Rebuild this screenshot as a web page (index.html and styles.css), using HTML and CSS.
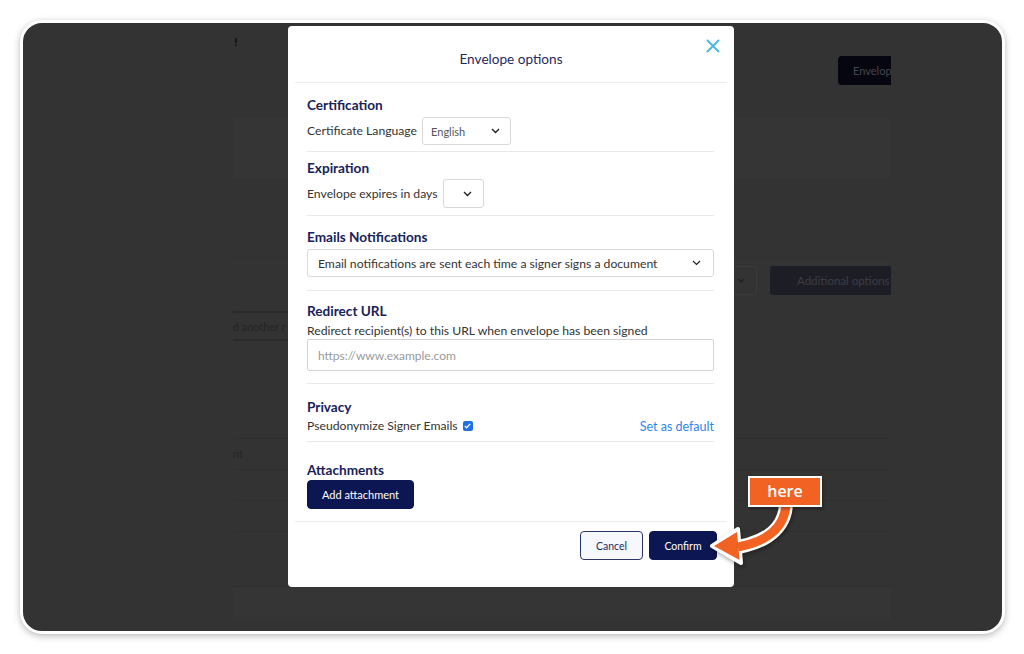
FILE: index.html
```html
<!DOCTYPE html>
<html lang="en">
<head>
<meta charset="utf-8">
<title>Envelope options</title>
<link rel="stylesheet" href="styles.css">
</head>
<body>
<div class="frame">
  <div class="bgpage">
    <div class="bg-top"><span class="bang">!</span></div>
    <div class="bg-actions"><span class="bg-btn">Envelope options</span></div>
    <div class="bg-box"></div>
    <div class="bg-line l1"></div>
    <div class="bg-row">
      <span class="bg-select"><svg width="8" height="5" viewBox="0 0 8 5"><path d="M1 1l3 3 3-3" fill="none" stroke="#222" stroke-width="1.2"/></svg></span>
      <span class="bg-btn2">Additional options</span>
    </div>
    <div class="bg-recip"><span>Add another r</span></div>
    <div class="bg-list">
      <div class="bg-li first">Document</div>
      <div class="bg-li"></div>
      <div class="bg-li"></div>
      <div class="bg-li"></div>
    </div>
    <div class="bg-foot"></div>
  </div>

  <div class="modal">
    <div class="modal-head">
      <h1 class="modal-title">Envelope options</h1>
      <svg class="close" width="14" height="14" viewBox="0 0 14 14"><path d="M1.5 1.5l11 11M12.5 1.5l-11 11" stroke="#4cb9e3" stroke-width="2" stroke-linecap="round"/></svg>
    </div>
    <div class="modal-body">
      <section class="sec s1">
        <h2>Certification</h2>
        <div class="row">
          <span class="lbl">Certificate Language</span>
          <div class="select lang"><span class="val">English</span><svg width="9" height="6" viewBox="0 0 9 6"><path d="M1 1l3.5 3.5L8 1" fill="none" stroke="#222" stroke-width="1.4"/></svg></div>
        </div>
      </section>
      <section class="sec s2">
        <h2>Expiration</h2>
        <div class="row">
          <span class="lbl">Envelope expires in days</span>
          <div class="select days"><svg width="9" height="6" viewBox="0 0 9 6"><path d="M1 1l3.5 3.5L8 1" fill="none" stroke="#222" stroke-width="1.4"/></svg></div>
        </div>
      </section>
      <section class="sec s3">
        <h2>Emails Notifications</h2>
        <div class="select wide"><span class="val dark">Email notifications are sent each time a signer signs a document</span><svg width="9" height="6" viewBox="0 0 9 6"><path d="M1 1l3.5 3.5L8 1" fill="none" stroke="#222" stroke-width="1.2"/></svg></div>
      </section>
      <section class="sec s4">
        <h2>Redirect URL</h2>
        <p class="lbl desc">Redirect recipient(s) to this URL when envelope has been signed</p>
        <div class="input"><span class="ph">https://www.example.com</span></div>
      </section>
      <section class="sec s5">
        <h2>Privacy</h2>
        <div class="row spread">
          <label class="lbl check">Pseudonymize Signer Emails <span class="box"><svg width="7" height="6" viewBox="0 0 7 6"><path d="M0.8 3l1.8 1.8L6.2 0.9" fill="none" stroke="#fff" stroke-width="1.4"/></svg></span></label>
          <a class="link">Set as default</a>
        </div>
      </section>
      <section class="sec s6">
        <h2>Attachments</h2>
        <button class="btn primary add">Add attachment</button>
      </section>
    </div>
    <div class="modal-foot">
      <button class="btn ghost">Cancel</button>
      <button class="btn primary confirm">Confirm</button>
    </div>
  </div>

  <div class="callout">
    <svg class="arrow" width="130" height="100" viewBox="0 0 130 100">
      <path d="M86 34 C85 58 66 72 38 77" fill="none" stroke="#fff" stroke-width="14"/>
      <polygon points="12,76 38,59 41,93" fill="#fff" stroke="#fff" stroke-width="4" stroke-linejoin="round"/>
      <path d="M86 34 C85 58 66 72 38 77" fill="none" stroke="#f26323" stroke-width="9"/>
      <polygon points="14,76 37,62 39.5,90" fill="#f26323"/>
    </svg>
    <div class="tag">here</div>
  </div>
</div>
</body>
</html>
```

FILE: styles.css
```css
* { box-sizing: border-box; }
html, body { margin: 0; padding: 0; }
body {
  width: 1024px;
  height: 654px;
  background: #fff;
  overflow: hidden;
  font-family: "Lato", "Open Sans", sans-serif;
}

.frame {
  position: relative;
  margin: 20px 0 0 20px;
  width: 985px;
  height: 614px;
  border: 3px solid #fff;
  border-radius: 22px;
  background: #333333;
  box-shadow: 0 2px 7px rgba(0,0,0,0.28);
  overflow: hidden;
}

/* dimmed page behind the modal */
.bgpage {
  margin-left: 210px;
  width: 658px;
  height: 100%;
  overflow: hidden;
  display: flex;
  flex-direction: column;
}
.bg-top { height: 33px; padding-top: 7px; }
.bang { font: bold 11px "Liberation Sans", sans-serif; color: #0c0c0c; margin-left: 1px; }
.bg-actions { height: 62px; white-space: nowrap; }
.bg-btn {
  display: inline-block;
  margin-left: 605px;
  width: 120px;
  height: 29px;
  line-height: 29px;
  padding-left: 15px;
  border-radius: 4px;
  background: #05060f;
  color: #444650;
  font-size: 11px;
  white-space: nowrap;
}
.bg-box { height: 60px; background: #353535; }
.bg-line { border-bottom: 1px solid #363636; }
.l1 { margin-top: 84px; }
.bg-row {
  margin-top: 2px;
  height: 30px;
  display: flex;
  align-items: center;
}
.bg-row > * { flex-shrink: 0; }
.bg-select {
  margin-left: 467px;
  width: 57px;
  height: 29px;
  border: 1px solid #3b3b3b;
  border-left: none;
  border-radius: 0 3px 3px 0;
  display: flex;
  align-items: center;
  justify-content: flex-end;
  padding-right: 11px;
}
.bg-select svg path { stroke: #1e1e1e; }
.bg-btn2 {
  margin-left: 13px;
  width: 140px;
  height: 29px;
  line-height: 29px;
  padding-left: 27px;
  border-radius: 3px;
  background: #1d1d25;
  color: #3c3d45;
  font-size: 11.5px;
  white-space: nowrap;
}
.bg-recip {
  margin-top: 16px;
  height: 30px;
  line-height: 27px;
  border-top: 2px solid #2b2b2b;
  border-bottom: 2px solid #2b2b2b;
  width: 69px;
  margin-left: -14px;
  font-size: 11px;
  color: #242424;
  white-space: nowrap;
  overflow: hidden;
}
.bg-list { margin-top: 97px; }
.bg-li {
  height: 31px;
  border-top: 1px solid #2f2f2f;
  margin-left: -41px;
  font-size: 11px;
  color: #262626;
  line-height: 30px;
}
.bg-foot { margin-top: 24px; height: 34px; background: #353535; border-top: 1px solid #2f2f2f; }

/* modal */
.modal {
  position: absolute;
  left: 265px;
  top: 3px;
  width: 446px;
  height: 561px;
  background: #fff;
  border-radius: 4px;
  display: flex;
  flex-direction: column;
}
.modal-head {
  position: relative;
  margin: 0 7px;
  padding: 24px 0 14px;
  border-bottom: 1px solid #ececec;
}
.modal-title {
  margin: 0;
  text-align: center;
  font-size: 13.6px;
  line-height: 18px;
  font-weight: 400;
  color: #1f2a5c;
}
.close { position: absolute; right: 7px; top: 13px; }

.modal-body { padding: 0 20px 0 19px; flex: 1; }
.sec { border-bottom: 1px solid #e9e9e9; }
.sec h2 {
  margin: 0;
  font-size: 13.6px;
  line-height: 16px;
  font-weight: 700;
  color: #17225a;
}
.s1 { padding: 14px 0 6px; }
.s2 { padding: 8px 0 7px; }
.s3 { padding: 13px 0 13px; }
.s4 { padding: 12px 0 12px; }
.s5 { padding: 15px 0 7px; }
.s6 { padding: 20px 0 11px; border-bottom: none; }

.row { display: flex; align-items: center; margin-top: 4px; }
.s2 .row { margin-top: 3px; }
.spread { justify-content: space-between; margin-top: 3px; }
.lbl { font-size: 12.2px; line-height: 16px; color: #333; }
.desc { margin: 4px 0 0; }

.select {
  display: flex;
  align-items: center;
  justify-content: space-between;
  border: 1px solid #d9d9d9;
  border-radius: 3px;
  background: #fff;
}
.lang { margin-left: 5px; width: 89px; height: 28px; padding: 0 10px 0 8px; }
.days { margin-left: 5px; width: 41px; height: 29px; padding: 0 11px 0 0; justify-content: flex-end; }
.wide { margin-top: 4px; height: 28px; padding: 0 12px 0 10px; }
.val { font-size: 11px; color: #555; }
.val.dark { font-size: 12.2px; color: #333; }

.input {
  margin-top: 0;
  height: 32px;
  border: 1px solid #d4d4d4;
  border-radius: 2px;
  padding-left: 10px;
  display: flex;
  align-items: center;
}
.ph { font-size: 12px; color: #9a9a9a; }

.check { display: flex; align-items: center; gap: 5px; }
.box {
  width: 10px; height: 10px;
  border-radius: 2px;
  background: #1f6fe5;
  display: inline-flex;
  align-items: center;
  justify-content: center;
}
.link { font-size: 12.5px; color: #2d86f0; cursor: pointer; }

.btn {
  font-family: inherit;
  font-size: 10.5px;
  border-radius: 4px;
  cursor: pointer;
}
.primary { background: #0c1652; color: #fff; border: 1px solid #0c1652; }
.add { margin-top: 2px; width: 107px; height: 29px; font-size: 11px; display: block; }
.ghost { background: #f7f8fe; color: #1f2a5c; border: 1px solid #2b356a; width: 63px; height: 29px; }
.confirm { width: 68px; height: 29px; }

.modal-foot {
  margin: 0 7px;
  border-top: 1px solid #ececec;
  padding: 9px 10px 27px 0;
  display: flex;
  justify-content: flex-end;
  gap: 6px;
}

/* annotation */
.callout {
  position: absolute;
  left: 677px;
  top: 447px;
  width: 130px;
  height: 100px;
}
.arrow { position: absolute; left: 0; top: 0; filter: drop-shadow(1px 2px 2px rgba(0,0,0,0.35)); }
.tag {
  position: absolute;
  left: 48px;
  top: 6px;
  width: 74px;
  height: 31px;
  background: #f26323;
  border: 2px solid #fff;
  color: #fff;
  font-family: "Open Sans", sans-serif;
  font-weight: 600;
  font-size: 16px;
  line-height: 26px;
  text-align: center;
  box-shadow: 1px 2px 3px rgba(0,0,0,0.35);
}
```
